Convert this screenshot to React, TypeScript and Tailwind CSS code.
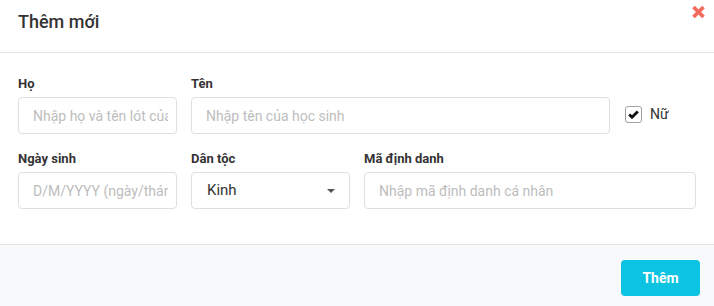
import React from "react";

const font = { fontFamily: "Roboto, 'Noto Sans', sans-serif" };

function Label({ children }: { children: React.ReactNode }) {
  return (
    <div className="h-[18px] mb-[4px] text-[13px] leading-[18px] font-bold text-[#333]">
      {children}
    </div>
  );
}

function Input({ placeholder, w }: { placeholder: string; w: string }) {
  return (
    <input
      placeholder={placeholder}
      className={`${w} h-[37px] rounded-[4px] border border-[#dcdfe6] bg-white pl-[14px] pr-2 text-[14px] text-[#333] placeholder:text-[#bdbdbd] outline-none`}
      style={font}
    />
  );
}

export default function App() {
  return (
    <div className="w-[714px] h-[306px] bg-white flex flex-col" style={font}>
      <div className="relative h-[53px] border-b border-[#e4e4e4] flex items-start">
        <div className="pl-[18px] pt-[10px] text-[18px] leading-[24px] font-medium text-[#333]">
          Thêm mới
        </div>
        <svg
          className="absolute left-[691px] top-[5px]"
          width="15"
          height="14"
          viewBox="0 0 15 14"
        >
          <path
            d="M2.5 2 L12.5 12 M12.5 2 L2.5 12"
            stroke="#f36b5c"
            strokeWidth="3.8"
            strokeLinecap="butt"
          />
        </svg>
      </div>
      <div className="h-[191px] pl-[18px] pt-[22px] flex flex-col">
        <div className="flex">
          <div className="flex flex-col">
            <Label>Họ</Label>
            <Input w="w-[159px]" placeholder="Nhập họ và tên lót của học sinh" />
          </div>
          <div className="flex flex-col ml-[14px]">
            <Label>Tên</Label>
            <Input w="w-[419px]" placeholder="Nhập tên của học sinh" />
          </div>
          <div className="flex flex-col ml-[15px]">
            <div className="h-[22px]" />
            <div className="h-[37px] flex items-center pb-[3px]">
              <div className="w-[17px] h-[17px] rounded-[3px] border border-[#a0a0a0] bg-white flex items-center justify-center">
                <svg width="11" height="9" viewBox="0 0 11 9">
                  <path
                    d="M1.2 4.4 L4 7.2 L9.8 1.4"
                    stroke="#111"
                    strokeWidth="2.8"
                    fill="none"
                  />
                </svg>
              </div>
              <span className="ml-[8px] text-[14px] text-[#333] leading-[18px]">Nữ</span>
            </div>
          </div>
        </div>
        <div className="flex mt-[16px]">
          <div className="flex flex-col">
            <Label>Ngày sinh</Label>
            <Input w="w-[159px]" placeholder="D/M/YYYY (ngày/tháng/năm)" />
          </div>
          <div className="flex flex-col ml-[14px]">
            <Label>Dân tộc</Label>
            <div className="w-[159px] h-[37px] rounded-[4px] border border-[#dcdfe6] bg-white flex items-center pl-[15px] pr-[14px] justify-between">
              <span className="text-[15px] text-[#333]">Kinh</span>
              <svg width="8" height="4" viewBox="0 0 8 4">
                <path d="M0 0 L8 0 L4 4 Z" fill="#555" />
              </svg>
            </div>
          </div>
          <div className="flex flex-col ml-[14px]">
            <Label>Mã định danh</Label>
            <Input w="w-[332px]" placeholder="Nhập mã định danh cá nhân" />
          </div>
        </div>
      </div>
      <div className="flex-1 border-t border-[#e4e4e4] bg-[#f8f9fb] flex justify-end items-start pt-[15px] pr-[14px]">
        <button className="w-[79px] h-[36px] rounded-[4px] bg-[#0cc3e2] text-white text-[14px] font-bold">
          Thêm
        </button>
      </div>
    </div>
  );
}
